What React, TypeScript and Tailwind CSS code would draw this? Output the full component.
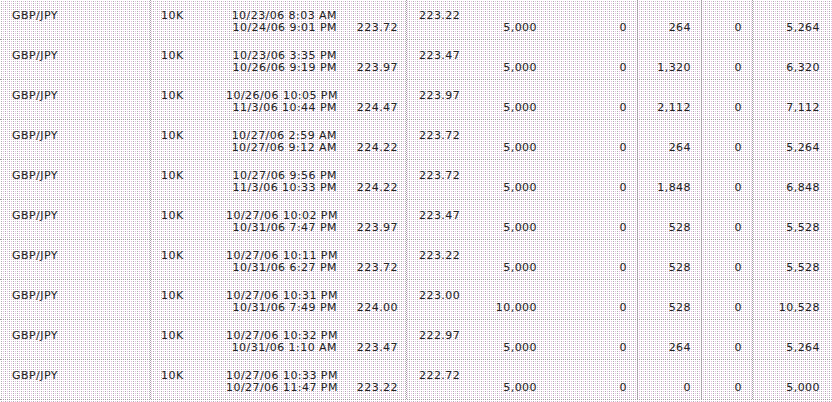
type Trade = {
  pair: string;
  size: string;
  opened: string;
  closed: string;
  openPrice: string;
  closePrice: string;
  amount: string;
  fee: string;
  gain: string;
  interest: string;
  total: string;
};

const TRADES: Trade[] = [
  { pair: "GBP/JPY", size: "10K", opened: "10/23/06 8:03 AM", closed: "10/24/06 9:01 PM", openPrice: "223.72", closePrice: "223.22", amount: "5,000", fee: "0", gain: "264", interest: "0", total: "5,264" },
  { pair: "GBP/JPY", size: "10K", opened: "10/23/06 3:35 PM", closed: "10/26/06 9:19 PM", openPrice: "223.97", closePrice: "223.47", amount: "5,000", fee: "0", gain: "1,320", interest: "0", total: "6,320" },
  { pair: "GBP/JPY", size: "10K", opened: "10/26/06 10:05 PM", closed: "11/3/06 10:44 PM", openPrice: "224.47", closePrice: "223.97", amount: "5,000", fee: "0", gain: "2,112", interest: "0", total: "7,112" },
  { pair: "GBP/JPY", size: "10K", opened: "10/27/06 2:59 AM", closed: "10/27/06 9:12 AM", openPrice: "224.22", closePrice: "223.72", amount: "5,000", fee: "0", gain: "264", interest: "0", total: "5,264" },
  { pair: "GBP/JPY", size: "10K", opened: "10/27/06 9:56 PM", closed: "11/3/06 10:33 PM", openPrice: "224.22", closePrice: "223.72", amount: "5,000", fee: "0", gain: "1,848", interest: "0", total: "6,848" },
  { pair: "GBP/JPY", size: "10K", opened: "10/27/06 10:02 PM", closed: "10/31/06 7:47 PM", openPrice: "223.97", closePrice: "223.47", amount: "5,000", fee: "0", gain: "528", interest: "0", total: "5,528" },
  { pair: "GBP/JPY", size: "10K", opened: "10/27/06 10:11 PM", closed: "10/31/06 6:27 PM", openPrice: "223.72", closePrice: "223.22", amount: "5,000", fee: "0", gain: "528", interest: "0", total: "5,528" },
  { pair: "GBP/JPY", size: "10K", opened: "10/27/06 10:31 PM", closed: "10/31/06 7:49 PM", openPrice: "224.00", closePrice: "223.00", amount: "10,000", fee: "0", gain: "528", interest: "0", total: "10,528" },
  { pair: "GBP/JPY", size: "10K", opened: "10/27/06 10:32 PM", closed: "10/31/06 1:10 AM", openPrice: "223.47", closePrice: "222.97", amount: "5,000", fee: "0", gain: "264", interest: "0", total: "5,264" },
  { pair: "GBP/JPY", size: "10K", opened: "10/27/06 10:33 PM", closed: "10/27/06 11:47 PM", openPrice: "223.22", closePrice: "222.72", amount: "5,000", fee: "0", gain: "0", interest: "0", total: "5,000" },
];

// dotted cell separators, like the old table skin
const SEP = "border-dotted border-[#a39ca3]";

function TradeRow({ t }: { t: Trade }) {
  return (
    <div className={`flex h-[40px] border-b ${SEP}`}>
      <div className={`w-[151px] shrink-0 border-r ${SEP} pl-3 pt-[10px]`}>
        <div>{t.pair}</div>
      </div>

      <div className={`flex w-[256px] shrink-0 border-r ${SEP} pl-[10px] pt-[10px]`}>
        <div className="w-[65px]">{t.size}</div>
        <div className="w-[111px] whitespace-nowrap text-right">
          <div>{t.opened}</div>
          <div>{t.closed}</div>
        </div>
        <div className="w-[61px] text-right">
          <div>&nbsp;</div>
          <div>{t.openPrice}</div>
        </div>
      </div>

      <div className={`flex w-[231px] shrink-0 border-r ${SEP} pl-3 pt-[10px]`}>
        <div className="w-[60px]">{t.closePrice}</div>
        <div className="w-[58px] text-right">
          <div>&nbsp;</div>
          <div>{t.amount}</div>
        </div>
        <div className="w-[90px] text-right">
          <div>&nbsp;</div>
          <div>{t.fee}</div>
        </div>
      </div>

      <div className={`w-[64px] shrink-0 border-r ${SEP} pr-[10px] pt-[10px] text-right`}>
        <div>&nbsp;</div>
        <div>{t.gain}</div>
      </div>

      <div className={`w-[51px] shrink-0 border-r ${SEP} pr-[10px] pt-[10px] text-right`}>
        <div>&nbsp;</div>
        <div>{t.interest}</div>
      </div>

      <div className="flex-1 pr-3 pt-[10px] text-right">
        <div>&nbsp;</div>
        <div>{t.total}</div>
      </div>
    </div>
  );
}

export default function App() {
  return (
    <div className="h-[402px] w-[832px] overflow-hidden bg-[#b8b0b8] bg-[linear-gradient(90deg,#fff_1px,transparent_1px),linear-gradient(#fff_1px,transparent_1px),linear-gradient(90deg,#b0b0b0_2px,#e2bce2_2px)] bg-[length:2px_2px,2px_2px,4px_2px] font-['DejaVu_Sans',Verdana,sans-serif] text-[11px] leading-[12px] tracking-[0.45px] text-[#222]">
      {TRADES.map((t, i) => (
        <TradeRow key={i} t={t} />
      ))}
    </div>
  );
}
